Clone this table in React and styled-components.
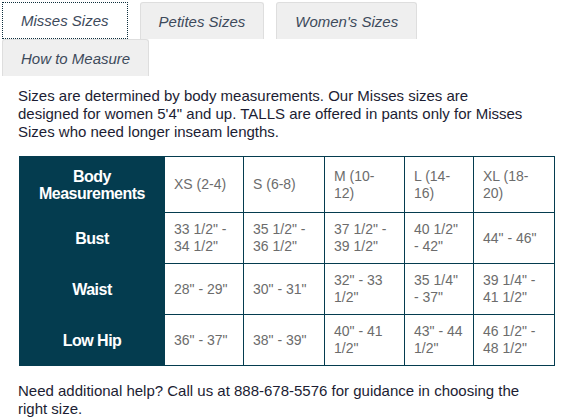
import React from "react";
import styled, { createGlobalStyle } from "styled-components";

const Global = createGlobalStyle`
  html, body { margin: 0; padding: 0; background: #fff; }
  body { font-family: "Liberation Sans", Arial, sans-serif; }
`;

const Page = styled.div`
  width: 561px;
  padding: 2px 0 0 2px;
  box-sizing: border-box;
`;

const TabList = styled.div`
  display: flex;
  flex-wrap: wrap;
  column-gap: 12px;
  width: 430px;
`;

const Tab = styled.button`
  height: 37px;
  box-sizing: border-box;
  padding: 0 18px;
  margin: 0;
  font-family: "Liberation Sans", Arial, sans-serif;
  font-style: italic;
  font-size: 15px;
  color: #3d4a5b;
  background: ${(p) => (p.$active ? "#fff" : "#efefef")};
  border: ${(p) => (p.$active ? "1px dotted #0d2f3d" : "1px solid #dedede")};
  border-bottom: ${(p) => (p.$active ? "1px dotted #0d2f3d" : "none")};
  border-radius: ${(p) => (p.$active ? "0" : "3px 3px 0 0")};
  cursor: pointer;
  white-space: nowrap;
`;

const Intro = styled.p`
  margin: 11px 0 0 16px;
  font-size: 15px;
  line-height: 18px;
  color: #1c1d33;
`;

const Table = styled.table`
  margin: 15px 0 0 17px;
  border-collapse: collapse;
  table-layout: fixed;
  width: 535px;
`;

const HeadCell = styled.th`
  background: #043c4f;
  color: #fff;
  font-size: 16px;
  font-weight: bold;
  line-height: 17px;
  letter-spacing: -0.5px;
  text-align: center;
  vertical-align: middle;
  height: ${(p) => p.$h}px;
  padding: 0 4px;
  border: 1px solid #043c4f;
  box-sizing: border-box;
`;

const Cell = styled.td`
  font-size: 14px;
  line-height: 17px;
  color: #6c6c6c;
  vertical-align: middle;
  padding: 0 4px 0 9px;
  border: 1px solid #043c4f;
  white-space: nowrap;
  height: ${(p) => p.$h}px;
  box-sizing: border-box;
`;

const Help = styled.p`
  margin: 16px 0 0 16px;
  font-size: 15px;
  line-height: 18px;
  color: #1c1d33;
`;

const cols = [145, 79, 81, 80, 69, 81];

const rows = [
  {
    label: ["Body", "Measurements"],
    h: 56,
    cells: [["XS (2-4)"], ["S (6-8)"], ["M (10-", "12)"], ["L (14-", "16)"], ["XL (18-", "20)"]],
  },
  {
    label: ["Bust"],
    h: 51,
    cells: [
      ['33 1/2" -', '34 1/2"'],
      ['35 1/2" -', '36 1/2"'],
      ['37 1/2" -', '39 1/2"'],
      ['40 1/2"', '- 42"'],
      ['44" - 46"'],
    ],
  },
  {
    label: ["Waist"],
    h: 51,
    cells: [
      ['28" - 29"'],
      ['30" - 31"'],
      ['32" - 33', '1/2"'],
      ['35 1/4"', '- 37"'],
      ['39 1/4" -', '41 1/2"'],
    ],
  },
  {
    label: ["Low Hip"],
    h: 51,
    cells: [
      ['36" - 37"'],
      ['38" - 39"'],
      ['40" - 41', '1/2"'],
      ['43" - 44', '1/2"'],
      ['46 1/2" -', '48 1/2"'],
    ],
  },
];

const Lines = ({ lines }) =>
  lines.map((l, i) => (
    <React.Fragment key={i}>
      {i > 0 && <br />}
      {l}
    </React.Fragment>
  ));

export default function App() {
  const tabs = ["Misses Sizes", "Petites Sizes", "Women's Sizes", "How to Measure"];
  return (
    <Page>
      <Global />
      <TabList>
        {tabs.map((t, i) => (
          <Tab key={t} $active={i === 0}>
            {t}
          </Tab>
        ))}
      </TabList>
      <Intro>
        Sizes are determined by body measurements. Our Misses sizes are
        <br />
        designed for women 5'4" and up. TALLS are offered in pants only for Misses
        <br />
        Sizes who need longer inseam lengths.
      </Intro>
      <Table>
        <colgroup>
          {cols.map((w, i) => (
            <col key={i} style={{ width: w }} />
          ))}
        </colgroup>
        <tbody>
          {rows.map((r) => (
            <tr key={r.label.join(" ")}>
              <HeadCell $h={r.h}>
                <Lines lines={r.label} />
              </HeadCell>
              {r.cells.map((c, j) => (
                <Cell key={j} $h={r.h}>
                  <Lines lines={c} />
                </Cell>
              ))}
            </tr>
          ))}
        </tbody>
      </Table>
      <Help>
        Need additional help? Call us at 888-678-5576 for guidance in choosing the
        <br />
        right size.
      </Help>
    </Page>
  );
}
